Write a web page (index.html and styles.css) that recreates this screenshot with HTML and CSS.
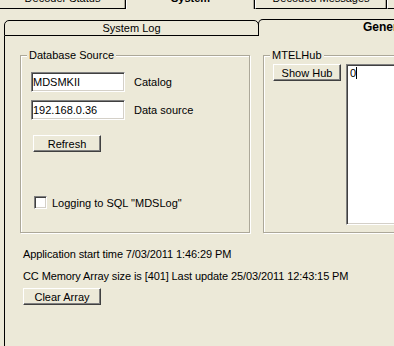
FILE: index.html
```html
<!DOCTYPE html>
<html lang="en">
<head>
    <meta charset="UTF-8">
    <title>System</title>
    <link rel="stylesheet" href="styles.css">
</head>
<body>
    <div class="top-tabs">
        <div class="top-tab first" style="width: 127px">Decoder Status</div>
        <div class="top-tab active" style="width: 129px">System</div>
        <div class="top-tab" style="width: 132px">Decoded Messages</div>
        <div class="top-tab" style="width: 120px">Raw Data</div>
    </div>

    <div class="sub-tabs">
        <div class="sub-tab">System Log</div>
        <div class="sub-tab active">General</div>
    </div>

    <div class="page">
        <div class="groups">
            <div class="group db-group">
                <span class="legend">Database Source</span>
                <div class="field-row">
                    <input type="text" class="edit" value="MDSMKII">
                    <span class="field-label">Catalog</span>
                </div>
                <div class="field-row">
                    <input type="text" class="edit" value="192.168.0.36">
                    <span class="field-label">Data source</span>
                </div>
                <button class="btn refresh-btn">Refresh</button>
                <label class="check-row">
                    <span class="check"></span>
                    <span>Logging to SQL "MDSLog"</span>
                </label>
            </div>

            <div class="group hub-group">
                <span class="legend">MTELHub</span>
                <div class="hub-row">
                    <button class="btn hub-btn">Show Hub</button>
                    <div class="memo">0<span class="caret"></span></div>
                </div>
            </div>
        </div>

        <div class="info">
            <p class="info-line">Application start time 7/03/2011 1:46:29 PM</p>
            <p class="info-line">CC Memory Array size is [401] Last update 25/03/2011 12:43:15 PM</p>
            <button class="btn clear-btn">Clear Array</button>
        </div>
    </div>
</body>
</html>
```

FILE: styles.css
```css
body {
    margin: 0;
    height: 346px;
    overflow: hidden;
    background-color: #ECE9D8;
    font-family: "Liberation Sans", Arial, sans-serif;
    font-size: 11px;
    color: #000;
}

/* outer tab strip, scrolled so only its lower edge shows */
.top-tabs {
    display: flex;
    height: 20px;
    margin-top: -11px;
    white-space: nowrap;
    overflow: hidden;
}

.top-tab {
    box-sizing: border-box;
    flex: none;
    height: 20px;
    line-height: 18px;
    text-align: center;
    overflow: hidden;
    border-left: 1px solid #fff;
    border-right: 1px solid #000;
    border-bottom: 1px solid #000;
    box-shadow: inset -1px 0 0 #ACA899;
}

.top-tab.first {
    margin-left: -1px;
}

.top-tab.active {
    height: 21px;
    font-weight: bold;
    border-bottom: none;
}

/* inner tab strip */
.sub-tabs {
    display: flex;
    align-items: flex-end;
    height: 17px;
    margin: 10px 0 0 4px;
    white-space: nowrap;
    overflow: hidden;
}

.sub-tab {
    box-sizing: border-box;
    flex: none;
    width: 255px;
    height: 16px;
    line-height: 14px;
    text-align: center;
    border: 1px solid #000;
    border-radius: 5px 5px 0 0;
}

.sub-tab.active {
    flex: 1;
    height: 17px;
    margin-left: -1px;
    padding-left: 104px;
    text-align: left;
    font-size: 12px;
    font-weight: bold;
    border-bottom: none;
    border-radius: 5px 0 0 0;
}

.page {
    box-sizing: border-box;
    margin-left: 4px;
    height: 310px;
    padding: 19px 0 0 15px;
    border-left: 1px solid #000;
    overflow: hidden;
}

.groups {
    display: flex;
    gap: 13px;
}

.group {
    position: relative;
    box-sizing: border-box;
    flex: none;
    height: 178px;
    border: 1px solid #ACA899;
    box-shadow: 1px 1px 0 #fff, inset 1px 1px 0 #fff;
}

.legend {
    position: absolute;
    top: -7px;
    left: 6px;
    padding: 0 2px;
    line-height: 13px;
    background-color: #ECE9D8;
}

.db-group {
    width: 230px;
    padding: 16px 0 0 10px;
}

.hub-group {
    width: 220px;
    padding: 8px 0 0 9px;
}

.field-row {
    display: flex;
    align-items: center;
    gap: 9px;
    margin-bottom: 8px;
}

.edit {
    box-sizing: border-box;
    width: 94px;
    height: 20px;
    margin: 0;
    padding: 0 1px;
    font: inherit;
    color: #000;
    background-color: #fff;
    border: 1px solid;
    border-color: #808080 #fff #fff #808080;
    box-shadow: inset 1px 1px 0 #404040, inset -1px -1px 0 #D4D0C8;
    outline: none;
}

.btn {
    display: block;
    box-sizing: border-box;
    height: 17px;
    margin: 0;
    padding: 0;
    font: inherit;
    white-space: nowrap;
    color: #000;
    background-color: #ECE9D8;
    border: 1px solid;
    border-color: #fff #404040 #404040 #fff;
    box-shadow: inset -1px -1px 0 #808080;
}

.refresh-btn {
    width: 68px;
    margin: 15px 0 0 2px;
}

.check-row {
    display: flex;
    align-items: center;
    gap: 5px;
    margin: 44px 0 0 3px;
}

.check {
    box-sizing: border-box;
    width: 13px;
    height: 13px;
    background-color: #fff;
    border: 1px solid;
    border-color: #808080 #fff #fff #808080;
    box-shadow: inset 1px 1px 0 #404040, inset -1px -1px 0 #D4D0C8;
}

.hub-row {
    display: flex;
    align-items: flex-start;
    gap: 5px;
}

.hub-btn {
    flex: none;
    width: 68px;
}

.memo {
    box-sizing: border-box;
    flex: none;
    width: 120px;
    height: 161px;
    padding: 2px 0 0 3px;
    line-height: 13px;
    background-color: #fff;
    border: 1px solid;
    border-color: #808080 #fff #fff #808080;
    box-shadow: inset 1px 1px 0 #404040, inset -1px -1px 0 #D4D0C8;
}

.caret {
    display: inline-block;
    width: 1px;
    height: 12px;
    vertical-align: -2px;
    background-color: #000;
}

.info {
    margin: 15px 0 0 3px;
    letter-spacing: -0.1px;
}

.info-line {
    margin: 0 0 9px;
    line-height: 13px;
}

.clear-btn {
    width: 78px;
    height: 17px;
    margin-top: -4px;
    letter-spacing: 0;
}
```
